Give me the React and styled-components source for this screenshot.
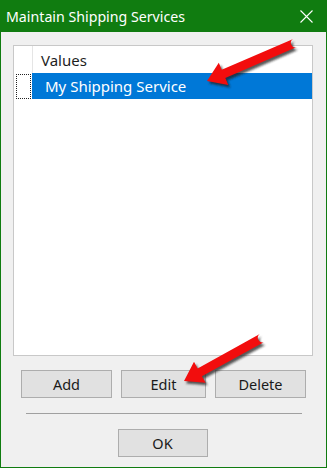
import React from 'react';
import styled, { createGlobalStyle } from 'styled-components';

const GlobalStyle = createGlobalStyle`
    html, body {
        margin: 0;
        padding: 0;
        background: #ffffff;
    }
    body {
        font-family: "Noto Sans", "Open Sans", "DejaVu Sans", sans-serif;
    }
`;

const Window = styled.div`
    position: relative;
    width: 327px;
    height: 468px;
    box-sizing: border-box;
    border: 1px solid #107c10;
    border-top: none;
    background: #f0f0f0;
    display: flex;
    flex-direction: column;
`;

const TitleBar = styled.div`
    height: 32px;
    margin: 0 -1px;
    background: #107c10;
    color: #ffffff;
    display: flex;
    align-items: center;
    justify-content: space-between;
    padding: 0 14px 0 6px;
    font-size: 14.2px;
`;

const Close = styled.svg`
    width: 13px;
    height: 13px;
`;

const Body = styled.div`
    flex: 1;
    display: flex;
    flex-direction: column;
    padding: 13px 13px 0 12px;
`;

const ListBox = styled.div`
    height: 311px;
    box-sizing: border-box;
    border: 1px solid #c8c8c8;
    background: #ffffff;
    display: flex;
    flex-direction: column;
`;

const Row = styled.div`
    display: flex;
    height: ${p => p.height}px;
`;

const Gutter = styled.div`
    width: 18px;
    box-sizing: border-box;
    display: flex;
    padding: 1px 1px 0 2px;
`;

const Focus = styled.div`
    flex: 1;
    border: 1px dotted #222;
`;

const Cell = styled.div`
    flex: 1;
    display: flex;
    align-items: center;
    font-size: 15px;
    padding-left: ${p => p.indent}px;
    color: ${p => p.selected ? '#ffffff' : '#1e1e1e'};
    background: ${p => p.selected ? '#0078d7' : 'transparent'};
    border-left: ${p => p.selected ? 'none' : '1px solid #e5e5e5'};
`;

const ButtonRow = styled.div`
    display: flex;
    gap: 9px;
    margin: 14px 0 0 8px;
`;

const Button = styled.div`
    width: ${p => p.width}px;
    height: 28px;
    box-sizing: border-box;
    border: 1px solid #adadad;
    background: #e1e1e1;
    display: flex;
    align-items: center;
    justify-content: center;
    padding-bottom: 1px;
    font-size: 14.5px;
    color: #1a1a1a;
`;

const Separator = styled.div`
    height: 1px;
    background: #a0a0a0;
    margin: 15px 11px 0 13px;
`;

const Footer = styled.div`
    display: flex;
    justify-content: center;
    margin: 15px 0 0 -1px;
`;

const Overlay = styled.svg`
    position: absolute;
    left: -1px;
    top: 0;
    width: 327px;
    height: 468px;
    pointer-events: none;
`;

function arrowPath(tx, ty, hx, hy, shaft, headLen, headW) {
    const dx = hx - tx;
    const dy = hy - ty;
    const len = Math.hypot(dx, dy);
    const ux = dx / len;
    const uy = dy / len;
    const nx = -uy;
    const ny = ux;
    const bx = hx - ux * headLen;
    const by = hy - uy * headLen;
    const s = shaft / 2;
    const w = headW / 2;
    const pts = [
        [tx + nx * s, ty + ny * s],
        [bx + nx * s, by + ny * s],
        [bx + nx * w, by + ny * w],
        [hx, hy],
        [bx - nx * w, by - ny * w],
        [bx - nx * s, by - ny * s],
        [tx - nx * s, ty - ny * s],
    ];
    const f = v => v.toFixed(1);
    return `M${f(pts[0][0])} ${f(pts[0][1])} ` +
        pts.slice(1, 6).map(p => `L${f(p[0])} ${f(p[1])}`).join(' ') +
        ` L${f(pts[6][0])} ${f(pts[6][1])} A${s} ${s} 0 0 1 ${f(pts[0][0])} ${f(pts[0][1])} Z`;
}

const arrows = [
    arrowPath(295, 43, 207, 81, 9, 18, 24),
    arrowPath(262, 338, 184, 381, 9, 18, 24),
];

const App = () => {
    return (
        <>
            <GlobalStyle />
            <Window>
                <TitleBar>
                    <span>Maintain Shipping Services</span>
                    <Close viewBox="0 0 13 13">
                        <path d="M0.5 0.5 L12.5 12.5 M12.5 0.5 L0.5 12.5" stroke="#ffffff" strokeWidth="1.1" fill="none" />
                    </Close>
                </TitleBar>
                <Body>
                    <ListBox>
                        <Row height={27}>
                            <Gutter />
                            <Cell indent={8}>Values</Cell>
                        </Row>
                        <Row height={26}>
                            <Gutter><Focus /></Gutter>
                            <Cell selected indent={13}>My Shipping Service</Cell>
                        </Row>
                    </ListBox>
                    <ButtonRow>
                        <Button width={91}>Add</Button>
                        <Button width={85}>Edit</Button>
                        <Button width={91}>Delete</Button>
                    </ButtonRow>
                    <Separator />
                    <Footer>
                        <Button width={90}>OK</Button>
                    </Footer>
                </Body>
                <Overlay viewBox="0 0 327 468">
                    <defs>
                        <filter id="shadow" x="-20%" y="-20%" width="140%" height="140%">
                            <feGaussianBlur stdDeviation="1.2" />
                        </filter>
                    </defs>
                    {arrows.map((d, i) => (
                        <g key={i}>
                            <path d={d} fill="#202020" opacity="0.75" transform="translate(2 2.5)" filter="url(#shadow)" />
                            <path d={d} fill="#f20d0d" />
                        </g>
                    ))}
                </Overlay>
            </Window>
        </>
    );
};

export default App;
